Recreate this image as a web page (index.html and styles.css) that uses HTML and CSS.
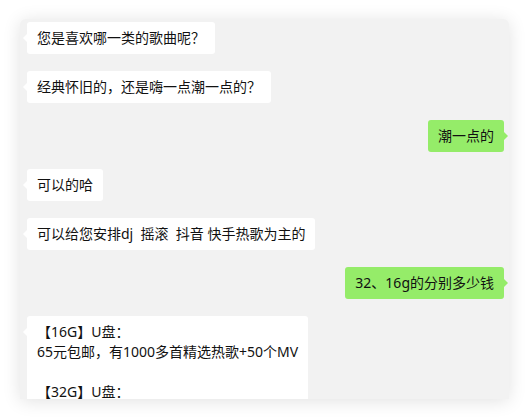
FILE: index.html
```html
<!DOCTYPE html>
<html lang="zh">
<head>
<meta charset="utf-8">
<link rel="stylesheet" href="styles.css">
</head>
<body>
<div class="page">
  <div class="chat">
    <div class="row left"><div class="bubble">您是喜欢哪一类的歌曲呢？</div></div>
    <div class="row left"><div class="bubble">经典怀旧的，还是嗨一点潮一点的？</div></div>
    <div class="row right"><div class="bubble">潮一点的</div></div>
    <div class="row left"><div class="bubble">可以的哈</div></div>
    <div class="row left"><div class="bubble">可以给您安排dj  摇滚  抖音 快手热歌为主的</div></div>
    <div class="row right"><div class="bubble">32、16g的分别多少钱</div></div>
    <div class="row left"><div class="bubble">【16G】U盘：
65元包邮，有1000多首精选热歌+50个MV

【32G】U盘：</div></div>
  </div>
</div>
</body>
</html>
```
FILE: styles.css
```css
html, body {
  margin: 0;
  padding: 0;
  background: #fff;
}
.page {
  padding: 19px 20px 0 20px;
  height: 420px;
  box-sizing: border-box;
  overflow: hidden;
}
.chat {
  width: 489px;
  height: 380px;
  box-sizing: border-box;
  background: #f2f2f2;
  border-radius: 6px 6px 0 0;
  box-shadow: 0 2px 18px rgba(0, 0, 0, 0.12);
  padding: 3px 5px 0 7px;
  display: flex;
  flex-direction: column;
  gap: 17px;
  overflow: hidden;
  font-family: "Noto Sans", "Noto Sans CJK SC", sans-serif;
  font-size: 14px;
  color: #111;
}
.row {
  display: flex;
  flex-shrink: 0;
}
.row.right {
  justify-content: flex-end;
}
.bubble {
  position: relative;
  background: #fff;
  border-radius: 3px;
  padding: 6px 10px;
  line-height: 20px;
  white-space: pre-wrap;
}
.row:last-child .bubble {
  padding-bottom: 12px;
}
.right .bubble {
  background: #95ec69;
}
.bubble::before {
  content: "";
  position: absolute;
  top: 12px;
  border: 4px solid transparent;
}
.left .bubble::before {
  left: -8px;
  border-right-color: #fff;
}
.right .bubble::before {
  right: -8px;
  border-left-color: #95ec69;
}
```
